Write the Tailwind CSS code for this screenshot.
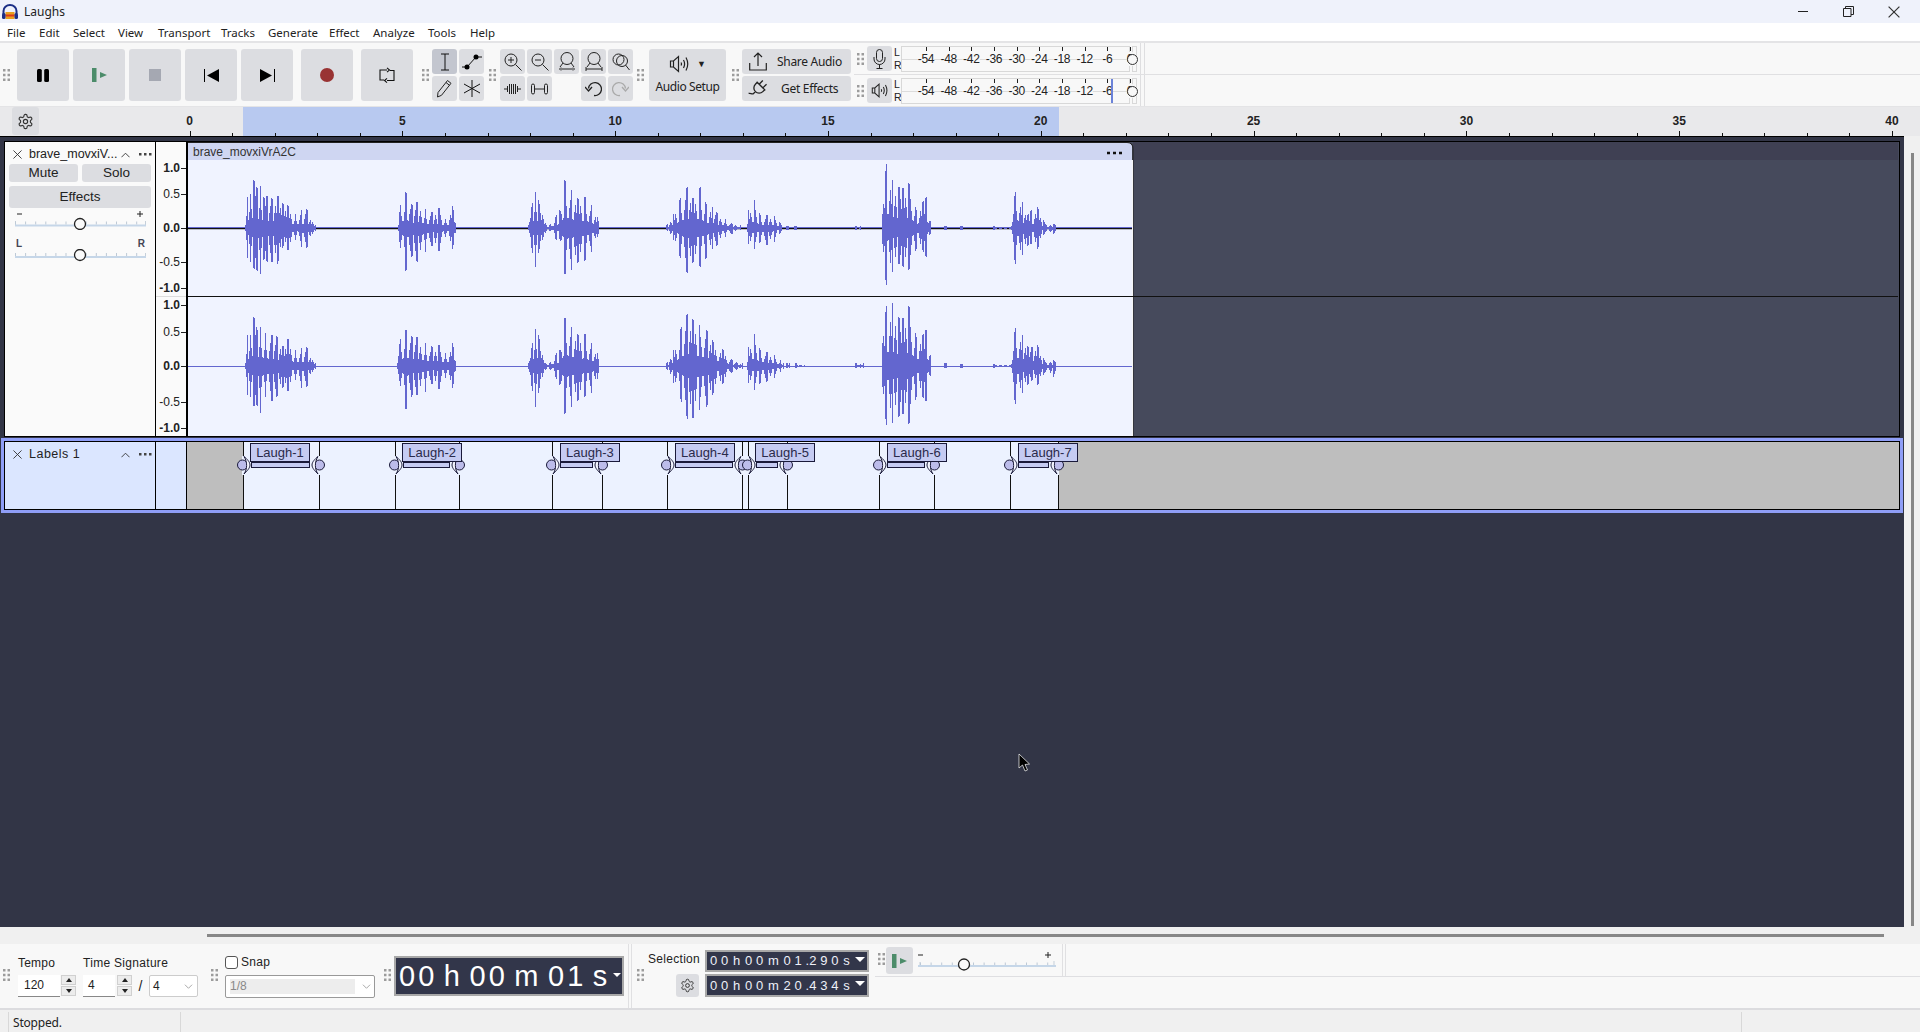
<!DOCTYPE html>
<html lang="en">
<head>
    <meta charset="UTF-8">
    <title>Laughs</title>
    <script src="https://cdn.jsdelivr.net/npm/@tailwindcss/browser@4"></script>
</head>
<body class="w-[1920px] h-[1032px] overflow-hidden flex flex-col bg-[#f0f0f0] text-[#222] font-['Liberation_Sans',sans-serif]">
    <svg class="hidden">
        <symbol id="grip" viewBox="0 0 7 12"><path fill="#9c9c9c" d="M0 0h2.5v2.5H0zM4.5 0H7v2.5H4.5zM0 4.7h2.5v2.5H0zM4.5 4.7H7v2.5H4.5zM0 9.5h2.5V12H0zM4.5 9.5H7V12H4.5z"/></symbol>
        <symbol id="gear" viewBox="0 0 24 24"><g fill="none" stroke="#333" stroke-width="1.6"><path d="M12.22 2h-.44a2 2 0 0 0-2 2v.18a2 2 0 0 1-1 1.73l-.43.25a2 2 0 0 1-2 0l-.15-.08a2 2 0 0 0-2.73.73l-.22.38a2 2 0 0 0 .73 2.73l.15.1a2 2 0 0 1 1 1.72v.51a2 2 0 0 1-1 1.74l-.15.09a2 2 0 0 0-.73 2.73l.22.38a2 2 0 0 0 2.73.73l.15-.08a2 2 0 0 1 2 0l.43.25a2 2 0 0 1 1 1.73V20a2 2 0 0 0 2 2h.44a2 2 0 0 0 2-2v-.18a2 2 0 0 1 1-1.73l.43-.25a2 2 0 0 1 2 0l.15.08a2 2 0 0 0 2.73-.73l.22-.39a2 2 0 0 0-.73-2.73l-.15-.08a2 2 0 0 1-1-1.74v-.5a2 2 0 0 1 1-1.74l.15-.09a2 2 0 0 0 .73-2.73l-.22-.38a2 2 0 0 0-2.73-.73l-.15.08a2 2 0 0 1-2 0l-.43-.25a2 2 0 0 1-1-1.73V4a2 2 0 0 0-2-2z"/><circle cx="12" cy="12" r="3"/></g></symbol>
        <symbol id="speaker" viewBox="0 0 20 20"><path fill="none" stroke="#222" stroke-width="1.2" d="M1.5 7v6h3l5 4.5v-15l-5 4.5zM4.5 7v6M12 8.5q1 1.5 0 3M14.5 6q2.200 4 0 8M17 3.500q3.500 6.500 0 13"/></symbol>
        <symbol id="playbar" viewBox="0 0 15 14"><path fill="#4c8c6a" d="M0 0h4.500v14H0zM8 4l7 3-7 3z"/></symbol>
        <symbol id="xmark" viewBox="0 0 10 10"><path stroke="#333" stroke-width="1" fill="none" d="M.5.5l9 9M9.500.5l-9 9"/></symbol>
        <symbol id="chev" viewBox="0 0 10 6"><path stroke="#333" stroke-width="1" fill="none" d="M.5 5.500L5 1l4.500 4.500"/></symbol>
        <symbol id="dots" viewBox="0 0 13 3"><path fill="#444" d="M0 0h2.500v2.500H0zM5 0h2.500v2.500H5zM10 0h2.500v2.500H10z"/></symbol>
        <symbol id="down" viewBox="0 0 12 7"><path stroke="#888" fill="none" d="M1 1l5 5 5-5"/></symbol>
    </svg>

    <!-- title bar -->
    <div class="h-[23px] shrink-0 flex items-center bg-[#eff2fb] pl-[2px]">
        <svg class="w-[16px] h-[16px]" viewBox="0 0 16 16">
            <path d="M1.500 10V7a6.500 6 0 0 1 13 0v3" fill="none" stroke="#1c2f86" stroke-width="2"/>
            <rect x="3.500" y="8" width="9" height="7" fill="#e8a020"/><rect x="3.500" y="10.500" width="9" height="2" fill="#dd3a1a"/>
            <rect x="0" y="9" width="3.500" height="6" rx="1.500" fill="#1c2f86"/><rect x="12.500" y="9" width="3.500" height="6" rx="1.500" fill="#1c2f86"/>
        </svg>
        <span class="ml-[6px] text-[12px] font-['Noto_Sans',sans-serif]">Laughs</span>
        <div class="ml-auto flex items-center pr-[20px] gap-[34px]">
            <svg class="w-[11px] h-[11px]" viewBox="0 0 11 11"><path d="M0 5.500h10" stroke="#222" stroke-width="1"/></svg>
            <svg class="w-[11px] h-[11px]" viewBox="0 0 11 11"><path d="M.5 2.500h7.500v8H.5zM2.500 2.500V.5h8v8H8" fill="none" stroke="#222" stroke-width="1"/></svg>
            <svg class="w-[12px] h-[12px]" viewBox="0 0 10 10"><use href="#xmark"/></svg>
        </div>
    </div>

    <!-- menu bar -->
    <div class="h-[18px] shrink-0 bg-white flex items-center pl-[7px] pt-[2px] text-[11.5px] font-['Noto_Sans',sans-serif]">
        <span class="w-[32px]">File</span><span class="w-[34px]">Edit</span><span class="w-[45px]">Select</span><span class="w-[40px]">View</span><span class="w-[63px]">Transport</span><span class="w-[47px]">Tracks</span><span class="w-[61px]">Generate</span><span class="w-[44px]">Effect</span><span class="w-[55px]">Analyze</span><span class="w-[42px]">Tools</span><span>Help</span>
    </div>

    <!-- top toolbars -->
    <div class="h-[66px] shrink-0 flex bg-[#f8f8f8] border-t-2 border-b border-[#e4e4e6]">
        <div class="w-[854px] shrink-0 flex items-start pt-[6px] pl-[3px]">
            <svg class="w-[7px] h-[12px] mt-[20px] mr-[7px]"><use href="#grip"/></svg>
            <div class="flex gap-[4px]">
                <div class="w-[52px] h-[52px] rounded-[3px] bg-[#dcdde1] flex items-center justify-center"><svg class="w-[12px] h-[13px]" viewBox="0 0 12 13"><rect width="4.800" height="13" rx="1.500"/><rect x="7.200" width="4.800" height="13" rx="1.500"/></svg></div>
                <div class="w-[52px] h-[52px] rounded-[3px] bg-[#dcdde1] flex items-center justify-center"><svg class="w-[15px] h-[14px]"><use href="#playbar"/></svg></div>
                <div class="w-[52px] h-[52px] rounded-[3px] bg-[#dcdde1] flex items-center justify-center"><div class="w-[12px] h-[12px] bg-[#a5a8b2]"></div></div>
                <div class="w-[52px] h-[52px] rounded-[3px] bg-[#dcdde1] flex items-center justify-center"><svg class="w-[15px] h-[13px]" viewBox="0 0 15 13"><path d="M0 0h1v13H0zM15 0v13L3 6.500z"/></svg></div>
                <div class="w-[52px] h-[52px] rounded-[3px] bg-[#dcdde1] flex items-center justify-center"><svg class="w-[15px] h-[13px]" viewBox="0 0 15 13"><path d="M14 0h1v13h-1zM0 0v13l12-6.500z"/></svg></div>
                <div class="w-[52px] h-[52px] rounded-[3px] bg-[#dcdde1] flex items-center justify-center ml-[4px]"><div class="w-[14px] h-[14px] rounded-full bg-[#993333]"></div></div>
                <div class="w-[52px] h-[52px] rounded-[3px] bg-[#dcdde1] flex items-center justify-center ml-[4px]"><svg class="w-[16px] h-[17px]" viewBox="0 0 16 17"><path d="M8 3H1v10h4M8 13.500h7V3.500h-4M8 .8L10.500 3 8 5.200M8 11.300L5.500 13.500 8 15.700" fill="none" stroke="#111" stroke-width="1.100"/></svg></div>
            </div>
            <svg class="w-[7px] h-[12px] mt-[20px] ml-[9px] mr-[3px]"><use href="#grip"/></svg>
            <div class="grid grid-cols-2 gap-[2px]">
                <div class="w-[25px] h-[25px] rounded-[3px] bg-[#c3c6cf] flex items-center justify-center"><svg class="w-[12px] h-[18px]" viewBox="0 0 12 18"><path d="M2 1h8M2 17h8M6 1v16" stroke="#111" fill="none"/></svg></div>
                <div class="w-[25px] h-[25px] rounded-[3px] bg-[#dcdde1] flex items-center justify-center"><svg class="w-[20px] h-[16px]" viewBox="0 0 20 16"><path d="M0 13h5l9-10h6" stroke="#111" fill="none"/><circle cx="5" cy="13" r="2.500"/><circle cx="14" cy="3" r="2.500"/></svg></div>
                <div class="w-[25px] h-[25px] rounded-[3px] bg-[#dcdde1] flex items-center justify-center"><svg class="w-[17px] h-[19px]" viewBox="0 0 17 19"><path d="M2 13.500L11.500 1.500l3.500 2.800-9.500 12-4 1.700zM10 3.500l3.500 2.800" fill="none" stroke="#222"/></svg></div>
                <div class="w-[25px] h-[25px] rounded-[3px] bg-[#dcdde1] flex items-center justify-center"><svg class="w-[16px] h-[17px]" viewBox="0 0 16 17"><path d="M8 0v17M0 4l16 9M16 4L0 13" stroke="#111" fill="none"/></svg></div>
            </div>
            <svg class="w-[7px] h-[12px] mt-[20px] ml-[5px] mr-[4px]"><use href="#grip"/></svg>
            <div class="grid grid-cols-5 gap-[2px]">
                <div class="w-[25px] h-[25px] rounded-[3px] bg-[#dcdde1] flex items-center justify-center"><svg class="w-[18px] h-[18px]" viewBox="0 0 18 18"><circle cx="7" cy="7" r="6" fill="none" stroke="#222"/><path d="M11.500 11.500l6 6M4 7h6M7 4v6" stroke="#222" fill="none"/></svg></div>
                <div class="w-[25px] h-[25px] rounded-[3px] bg-[#dcdde1] flex items-center justify-center"><svg class="w-[18px] h-[18px]" viewBox="0 0 18 18"><circle cx="7" cy="7" r="6" fill="none" stroke="#222"/><path d="M11.500 11.500l6 6M4 7h6" stroke="#222" fill="none"/></svg></div>
                <div class="w-[25px] h-[25px] rounded-[3px] bg-[#dcdde1] flex items-center justify-center"><svg class="w-[18px] h-[20px]" viewBox="0 0 18 20"><circle cx="9" cy="6.500" r="6" fill="none" stroke="#222"/><path d="M5 11l-3 4M13 11l3 4M3 17h12M3 15.500l-1.500 1.500 1.500 1.500M15 15.500l1.500 1.500-1.500 1.500" stroke="#222" fill="none"/></svg></div>
                <div class="w-[25px] h-[25px] rounded-[3px] bg-[#dcdde1] flex items-center justify-center"><svg class="w-[18px] h-[20px]" viewBox="0 0 18 20"><circle cx="9" cy="6.500" r="6" fill="none" stroke="#222"/><path d="M5 11l-3 4M13 11l3 4M1 17h16M1 15v4M17 15v4" stroke="#222" fill="none"/></svg></div>
                <div class="w-[25px] h-[25px] rounded-[3px] bg-[#dcdde1] flex items-center justify-center"><svg class="w-[18px] h-[18px]" viewBox="0 0 18 18"><circle cx="6.500" cy="6.500" r="5.500" fill="none" stroke="#222"/><circle cx="10" cy="8" r="5.500" fill="none" stroke="#222"/><path d="M13.500 12l4 5" stroke="#222" fill="none"/></svg></div>
                <div class="w-[25px] h-[25px] rounded-[3px] bg-[#dcdde1] flex items-center justify-center"><svg class="w-[17px] h-[12px]" viewBox="0 0 17 12"><path d="M0 6h3.500M13.500 6H17M3.500 3v6M5.500 1v10M7.500 1v10M9.500 1v10M11.500 1v10M13.500 3v6" stroke="#222" fill="none"/></svg></div>
                <div class="w-[25px] h-[25px] rounded-[3px] bg-[#dcdde1] flex items-center justify-center"><svg class="w-[17px] h-[12px]" viewBox="0 0 17 12"><path d="M3.500 6h10M.5 2.500a1.500 1.500 0 0 1 3 0v7a1.500 1.500 0 0 1-3 0zM13.500 2.500a1.500 1.500 0 0 1 3 0v7a1.500 1.500 0 0 1-3 0z" stroke="#222" fill="none"/></svg></div>
                <div class="w-[25px] h-[25px]"></div>
                <div class="w-[25px] h-[25px] rounded-[3px] bg-[#dcdde1] flex items-center justify-center"><svg class="w-[17px] h-[17px]" viewBox="0 0 17 17"><path d="M3.500 8.500A6.500 6.500 0 1 1 9 15.500" fill="none" stroke="#222" stroke-width="1.300"/><path d="M0 7l3.500 4L7 7" fill="none" stroke="#222" stroke-width="1.300"/></svg></div>
                <div class="w-[25px] h-[25px] rounded-[3px] bg-[#dcdde1] flex items-center justify-center"><svg class="w-[17px] h-[17px]" viewBox="0 0 17 17"><path d="M13.500 8.500A6.500 6.500 0 1 0 8 15.500" fill="none" stroke="#aaa" stroke-width="1.300"/><path d="M17 7l-3.500 4L10 7" fill="none" stroke="#aaa" stroke-width="1.300"/></svg></div>
            </div>
            <svg class="w-[7px] h-[12px] mt-[20px] ml-[4px] mr-[5px]"><use href="#grip"/></svg>
            <div class="w-[77px] h-[52px] rounded-[3px] bg-[#dcdde1] flex flex-col items-center pt-[5px]">
                <div class="flex items-center gap-[8px] h-[20px]"><svg class="w-[20px] h-[20px]"><use href="#speaker"/></svg><span class="text-[9px] leading-none">▼</span></div>
                <span class="text-[12px] mt-[4px] whitespace-nowrap font-['Noto_Sans',sans-serif] tracking-[-0.4px]">Audio Setup</span>
            </div>
            <svg class="w-[7px] h-[12px] mt-[20px] ml-[6px] mr-[3px]"><use href="#grip"/></svg>
            <div class="flex flex-col gap-[2px]">
                <div class="w-[109px] h-[25px] rounded-[3px] bg-[#dcdde1] flex items-center text-[12px] font-['Noto_Sans',sans-serif] tracking-[-0.3px]"><svg class="w-[18px] h-[19px] ml-[7px] mr-[10px]" viewBox="0 0 18 19"><path d="M.7 11v7h16.600v-7M9 14V1M5 5l4-4 4 4" fill="none" stroke="#222" stroke-width="1.200"/></svg>Share Audio</div>
                <div class="w-[109px] h-[25px] rounded-[3px] bg-[#dcdde1] flex items-center text-[12px] font-['Noto_Sans',sans-serif] tracking-[-0.3px]"><svg class="w-[21px] h-[21px] ml-[6px] mr-[12px]" viewBox="0 0 24 24"><g transform="rotate(45 12 12)" fill="none" stroke="#222" stroke-width="1.500"><path d="M9 2v6M15 2v6M5 8h14M6 8v3a6 6 0 1 0 12 0V8M12 17v3c0 2 -3 2 -4 4"/></g></svg>Get Effects</div>
            </div>
        </div>
        <div class="flex-1 flex flex-col">
            <div class="h-[32px] border-b border-[#e0e0e2] flex items-center meter-row" data-level="0"></div>
            <div class="h-[31px] flex items-center meter-row" data-level="1"></div>
        </div>
    </div>

    <!-- timeline ruler -->
    <div class="h-[29px] shrink-0 bg-[#e9e9eb] relative" id="ruler">
        <div class="absolute left-[243px] w-[816px] top-0 bottom-0 bg-[#b8c9f0]"></div>
        <div class="absolute left-[12px] w-[27px] top-0 bottom-[1px] rounded-[3px] bg-[#dcdde1] flex items-center justify-center"><svg class="w-[17px] h-[17px]"><use href="#gear"/></svg></div>
    </div>

    <!-- tracks -->
    <div class="h-[791px] shrink-0 flex">
        <div class="w-[1904px] bg-[#323546] border-t border-black pt-[4px] relative">
            <div class="ml-[4px] w-[1896px] h-[296px] border border-black flex">
                <div class="w-[150px] h-full bg-[#fafafa]">
                    <div class="flex items-center h-[22px] pt-[3px] pl-[8px] text-[12.5px]">
                        <svg class="w-[9px] h-[9px]"><use href="#xmark"/></svg>
                        <span class="ml-[7px] w-[90px] truncate">brave_movxiV...</span>
                        <svg class="w-[9px] h-[6px] ml-[2px]"><use href="#chev"/></svg>
                        <svg class="w-[13px] h-[3px] ml-[9px]"><use href="#dots"/></svg>
                    </div>
                    <div class="flex gap-[4px] px-[4px] text-[13.5px]">
                        <div class="w-[69px] h-[18px] pt-px rounded-[3px] bg-[#dcdde1] flex items-center justify-center">Mute</div>
                        <div class="w-[69px] h-[18px] pt-px rounded-[3px] bg-[#dcdde1] flex items-center justify-center">Solo</div>
                    </div>
                    <div class="mx-[4px] mt-[4px] h-[22px] pt-px rounded-[3px] bg-[#dcdde1] flex items-center justify-center text-[13.5px]">Effects</div>
                    <svg class="block ml-[10px]" width="131" height="22" viewBox="0 0 131 22">
                        <path d="M2 6h5M122 6h6M125 3v6" stroke="#222" stroke-width="1"/>
                        <path d="M0.500 13v4M130.500 13v4" stroke="#c5cfd9"/>
                        <path d="M0 15h131" stroke="#bdc9d6" stroke-dasharray="1 9.100" stroke-width="3"/>
                        <path d="M0 17.500h131" stroke="#c5d6e8" stroke-width="2"/>
                        <circle cx="65" cy="16" r="5.500" fill="#fafafa" stroke="#222" stroke-width="1.300"/>
                    </svg>
                    <div class="flex justify-between ml-[10px] px-[1px] w-[131px] text-[10px] font-bold leading-[10px] mt-[9px] text-[#445]"><span>L</span><span>R</span></div>
                    <svg class="block ml-[10px]" width="131" height="14" viewBox="0 0 131 14">
                        <path d="M0.500 4v4M130.500 4v4" stroke="#c5cfd9"/>
                        <path d="M0 5.500h131" stroke="#bdc9d6" stroke-dasharray="1 9.100" stroke-width="3"/>
                        <path d="M0 8h131" stroke="#c5d6e8" stroke-width="2"/>
                        <circle cx="65" cy="6" r="5.500" fill="#fafafa" stroke="#222" stroke-width="1.300"/>
                    </svg>
                </div>
                <div class="w-px bg-black"></div>
                <div class="w-[30px] h-full bg-[#fafafa] relative" id="vruler"></div>
                <div class="w-[2px] bg-black"></div>
                <div class="flex-1 relative bg-[#464a5c]">
                    <svg id="wave" class="block" width="1710" height="294" viewBox="188 142 1710 294"></svg>
                    <div class="absolute left-[5px] top-[1px] h-[18px] flex items-center text-[12px] text-[#333]">brave_movxiVrA2C</div>
                </div>
            </div>
            <div class="mt-px ml-px w-[1902px] h-[75px] border-[3px] border-[#8f9ef7]">
                <div class="h-full border border-black flex">
                    <div class="w-[150px] bg-[#dbe6ff] pl-[8px] text-[12.5px]">
                        <div class="flex items-center h-[24px] pt-px">
                            <svg class="w-[9px] h-[9px]"><use href="#xmark"/></svg>
                            <span class="ml-[7px] w-[90px] tracking-[0.5px]">Labels 1</span>
                            <svg class="w-[9px] h-[6px] ml-[2px]"><use href="#chev"/></svg>
                            <svg class="w-[13px] h-[3px] ml-[9px]"><use href="#dots"/></svg>
                        </div>
                    </div>
                    <div class="w-px bg-black"></div>
                    <div class="w-[30px] bg-[#dbe6ff]"></div>
                    <div class="w-px bg-black"></div>
                    <div class="flex-1 relative bg-[#bebebe] overflow-hidden" id="labels">
                        <div class="absolute left-[56px] w-[816px] top-0 bottom-0 bg-[#ecf2ff]"></div>
                    </div>
                </div>
            </div>
            <svg class="absolute left-[1018px] top-[616px] w-[13px] h-[19px]" viewBox="0 0 13 19"><path d="M1 1v14l3.500-3 2.500 6 2.500-1-2.500-5.500 4.500-.5z" fill="#000" stroke="#fff" stroke-width=".7"/></svg>
        </div>
        <div class="flex-1 pt-[17px] pl-[7px]"><div class="w-[3px] h-[773px] bg-[#878787]"></div></div>
    </div>

    <!-- horizontal scrollbar -->
    <div class="h-[17px] shrink-0 pt-[7px] pl-[207px]"><div class="w-[1677px] h-[3px] bg-[#878787]"></div></div>

    <!-- bottom toolbars -->
    <div class="h-[66px] shrink-0 flex bg-[#f8f8f8] border-b-2 border-[#dcdcdf]">
        <div class="w-[875px] shrink-0 flex items-start pl-[3px]">
            <svg class="w-[7px] h-[12px] mt-[25px] mr-[8px]"><use href="#grip"/></svg>
            <div class="w-[58px] mr-[7px] pt-[11px]">
                <div class="h-[16px] text-[12px] leading-[16px] tracking-[0.2px]">Tempo</div>
                <div class="flex gap-px mt-[4px]">
                    <div class="w-[42px] h-[22px] bg-white border-b border-[#888] text-[12px] leading-[21px] pl-[6px]">120</div>
                    <div class="w-[15px] h-[21px] flex flex-col gap-px">
                        <div class="h-[10px] bg-[#ececec] border border-[#d0d0d0] flex items-center justify-center"><div class="w-0 h-0 border-x-[3px] border-x-transparent border-b-[4px] border-b-[#222]"></div></div>
                        <div class="h-[10px] bg-[#ececec] border border-[#d0d0d0] flex items-center justify-center"><div class="w-0 h-0 border-x-[3px] border-x-transparent border-t-[4px] border-t-[#222]"></div></div>
                    </div>
                </div>
            </div>
            <div class="w-[115px] pt-[11px]">
                <div class="h-[16px] text-[12px] leading-[16px] whitespace-nowrap tracking-[0.3px]">Time Signature</div>
                <div class="flex mt-[4px]">
                    <div class="w-[32px] h-[22px] bg-white border-b border-[#888] text-[12px] leading-[21px] pl-[5px]">4</div>
                    <div class="w-[15px] h-[21px] ml-[2px] flex flex-col gap-px">
                        <div class="h-[10px] bg-[#ececec] border border-[#d0d0d0] flex items-center justify-center"><div class="w-0 h-0 border-x-[3px] border-x-transparent border-b-[4px] border-b-[#222]"></div></div>
                        <div class="h-[10px] bg-[#ececec] border border-[#d0d0d0] flex items-center justify-center"><div class="w-0 h-0 border-x-[3px] border-x-transparent border-t-[4px] border-t-[#222]"></div></div>
                    </div>
                    <span class="w-[17px] text-center text-[14px] leading-[22px]">/</span>
                    <div class="w-[49px] h-[22px] bg-white border border-[#ccc] rounded-[2px] text-[12px] leading-[20px] pl-[3px] flex items-center justify-between pr-[4px]">4<svg class="w-[9px] h-[5px]"><use href="#down"/></svg></div>
                </div>
            </div>
            <svg class="w-[7px] h-[12px] mt-[25px] ml-[13px] mr-[7px]"><use href="#grip"/></svg>
            <div class="w-[150px] pt-[11px]">
                <div class="h-[14px] flex items-center text-[12px] tracking-[0.3px]"><div class="w-[13px] h-[13px] border border-[#555] rounded-[3px] bg-white mr-[3px]"></div>Snap</div>
                <div class="mt-[6px] h-[23px] bg-white border border-[#999] rounded-[2px] pl-[4px] pt-[3px] flex items-start">
                    <div class="w-[125px] h-[15px] bg-[#ededed] text-[12px] leading-[15px] text-[#888]">1/8</div>
                    <svg class="w-[9px] h-[5px] ml-[7px] mt-[5px]"><use href="#down"/></svg>
                </div>
            </div>
            <svg class="w-[7px] h-[12px] mt-[25px] ml-[9px] mr-[3px]"><use href="#grip"/></svg>
            <div class="w-[230px] h-[40px] mt-[12px] border-2 border-[#a8a8a8] bg-[#32364a] text-white text-[29px] leading-[36px] pl-[3px] relative whitespace-nowrap tracking-[3px] [word-spacing:-4.5px]">00 h 00 m 01 s<div class="absolute right-px top-[15px] w-0 h-0 border-x-[4px] border-x-transparent border-t-[4px] border-t-white"></div></div>
            <div class="h-full ml-[4px] w-[4px] border-x border-[#e0e0e2]"></div>
            <svg class="w-[7px] h-[12px] mt-[25px] ml-[5px] mr-[4px]"><use href="#grip"/></svg>
            <div class="w-[51px] pt-[8px] flex flex-col items-end">
                <div class="h-[14px] text-[12px] leading-[14px] w-full whitespace-nowrap tracking-[0.3px]">Selection</div>
                <div class="w-[23px] h-[23px] rounded-[3px] bg-[#dcdde1] mt-[8px] flex items-center justify-center"><svg class="w-[15px] h-[15px]"><use href="#gear"/></svg></div>
            </div>
            <div class="flex flex-col gap-[2px] ml-[6px] pt-[6px]">
                <div class="w-[164px] h-[22px] border-2 border-[#a8a8a8] bg-[#32364a] text-[#eef0f8] text-[13px] leading-[18px] pl-[3px] tracking-[3.8px] [word-spacing:-6.5px] whitespace-nowrap relative">00 h 00 m 01<span class="tracking-[0px]">.</span>290 s<div class="absolute right-[2px] top-[5px] w-0 h-0 border-x-[5px] border-x-transparent border-t-[5px] border-t-white"></div></div>
                <div class="w-[164px] h-[23px] border-2 border-[#a8a8a8] bg-[#32364a] text-[#eef0f8] text-[13px] leading-[19px] pl-[3px] tracking-[3.8px] [word-spacing:-6.5px] whitespace-nowrap relative">00 h 00 m 20<span class="tracking-[0px]">.</span>434 s<div class="absolute right-[2px] top-[5px] w-0 h-0 border-x-[5px] border-x-transparent border-t-[5px] border-t-white"></div></div>
            </div>
        </div>
        <div class="flex-1 flex flex-col">
            <div class="h-[33px] border-b border-[#dfdfe2] flex items-start">
                <svg class="w-[7px] h-[12px] mt-[9px] ml-[3px] mr-[1px] shrink-0"><use href="#grip"/></svg>
                <div class="w-[27px] h-[27px] mt-[3px] rounded-[3px] bg-[#dcdde1] flex items-center justify-center"><svg class="w-[15px] h-[14px]"><use href="#playbar"/></svg></div>
                <svg class="block ml-[5px] mt-[3px] shrink-0" width="138" height="28" viewBox="0 0 138 28">
                    <path d="M0 8h5M127 8h6M130 5v6" stroke="#222" stroke-width="1"/>
                    <path d="M2 15v4M136 14v5" stroke="#c5cfd9"/>
                    <path d="M2 17h134" stroke="#bdc9d6" stroke-dasharray="1 9.600" stroke-width="3"/>
                    <path d="M0 19h138" stroke="#c5d6e8" stroke-width="2"/>
                    <circle cx="46" cy="17.500" r="5.500" fill="#fafafa" stroke="#222" stroke-width="1.300"/>
                </svg>
                <div class="h-full w-[4px] ml-[6px] border-x border-[#e0e0e2]"></div>
            </div>
        </div>
    </div>

    <!-- status bar -->
    <div class="flex-1 flex text-[12px] font-['Noto_Sans',sans-serif] tracking-[-0.2px]">
        <div class="w-[9px] border-r border-[#d8d8d8] my-[2px]"></div>
        <div class="w-[172px] border-r border-[#d8d8d8] my-[2px] pl-[4px] leading-[21px]">Stopped.</div>
        <div class="w-[1561px] border-r border-[#d8d8d8] my-[2px]"></div>
    </div>

    <script>
        // timeline ruler: 42.56px per second, zero at x=189.6
        const ruler = document.getElementById("ruler");
        let rulerHtml = "";
        for (let s = 0; s <= 40; s++) {
            const x = 189.6 + 42.56 * s;
            const major = s % 5 === 0;
            rulerHtml += `<div class="absolute bottom-0 w-px bg-[#111] ${major ? "h-[5px]" : "h-[3px]"}" style="left:${Math.round(x)}px"></div>`;
            if (major) rulerHtml += `<span class="absolute top-[8px] -translate-x-1/2 text-[12px] leading-[13px] font-bold text-[#222]" style="left:${x}px">${s}</span>`;
        }
        ruler.insertAdjacentHTML("beforeend", rulerHtml);

        // level meters
        const meterLabels = ["-54", "-48", "-42", "-36", "-30", "-24", "-18", "-12", "-6", "0"];
        document.querySelectorAll(".meter-row").forEach(row => {
            const play = row.dataset.level === "1";
            let marks = "";
            meterLabels.forEach((label, i) => {
                const x = 24 + i * 22.67;
                marks += `<div class="absolute top-0 w-px h-[4px] bg-[#222]" style="left:${Math.round(x)}px"></div>`;
                marks += `<span class="absolute top-[5px] -translate-x-1/2 text-[12px] leading-[14px] bg-[#f8f8f8] tracking-[-0.3px]" style="left:${x}px">${label}</span>`;
            });
            row.innerHTML = `
                <svg class="w-[7px] h-[12px] ml-[3px] shrink-0"><use href="#grip"/></svg>
                <div class="w-[25px] h-[25px] ml-[3px] rounded-[3px] bg-[#dcdde1] flex items-center justify-center">
                    ${play
                        ? '<svg class="w-[17px] h-[17px]"><use href="#speaker"/></svg>'
                        : '<svg class="w-[13px] h-[20px]" viewBox="0 0 13 20"><rect x="3.500" y=".5" width="6" height="12" rx="3" fill="none" stroke="#222"/><path d="M1 8v2a5.500 5.500 0 0 0 11 0V8M6.500 15.500V19M3.500 19.500h6" fill="none" stroke="#222"/></svg>'}
                </div>
                <div class="w-[9px] ml-[2px] text-[10.500px] leading-[13px] text-[#222]">L<br>R</div>
                <div class="w-[229px] h-[26px] border border-[#d8d8d8] relative ml-[-2px]">
                    <div class="absolute left-0 right-0 top-[12px] h-px bg-[#dcdcdc]"></div>
                    ${marks}
                    ${play ? '<div class="absolute left-[209px] top-0 bottom-0 w-[2px] bg-[#6b82d8]"></div>' : ""}
                    <div class="absolute left-[225px] top-[7px] w-[11px] h-[11px] rounded-full border border-[#333] bg-[#f8f8f8]"></div>
                </div>
                <div class="w-[5px] h-[26px] ml-[2px] border border-[#d8d8d8]"></div>
                <div class="w-[5px] self-stretch ml-[3px] border-x border-[#dedee0]"></div>`;
        });

        // vertical dB scale
        const scale = [
            ["1.0", 168, 1], ["0.5", 194, 0], ["0.0", 228, 1], ["-0.5", 262, 0], ["-1.0", 288, 1],
            ["1.0", 305, 1], ["0.5", 332, 0], ["0.0", 366, 1], ["-0.5", 402, 0], ["-1.0", 428, 1]
        ];
        document.getElementById("vruler").innerHTML = scale.map(([t, y, b]) =>
            `<span class="absolute right-[6px] -translate-y-1/2 text-[12px] leading-[13px] text-[#222] ${b ? "font-bold" : ""}" style="top:${y - 142}px">${t}</span>
             <div class="absolute right-0 w-[5px] h-px bg-[#222]" style="top:${y - 142}px"></div>`
        ).join("") + '<div class="absolute left-0 right-0 top-[154px] h-px bg-[#dcdcdc]"></div>';

        // waveform peaks, read off the two crops: [x, top, bottom]
        const crop4 = x => x / 3, crop5 = x => x / 2.306 + 480;
        const ch1 = [
            [crop4, [[737,285,302],[740,200,380],[750,190,395],[760,145,415],[770,175,420],[780,168,430],[790,205,385],[800,195,395],[815,205,395],[832,195,400],[848,220,345],[862,225,360],[885,250,330],[903,238,350],[920,235,352],[938,280,305],[945,285,302]]],
            [crop4, [[1194,285,302],[1198,230,345],[1216,183,425],[1235,225,375],[1250,215,395],[1275,235,365],[1295,245,345],[1316,232,365],[1335,265,320],[1357,225,358],[1366,285,300]]],
            [crop5, [[112,285,300],[118,225,355],[127,185,412],[135,215,360],[145,265,320],[160,285,300],[175,255,330],[182,240,325],[194,148,433],[210,180,420],[225,205,395],[241,198,390],[256,225,365],[270,260,320],[274,285,300]]],
            [crop5, [[430,285,300],[445,250,330],[460,205,380],[477,168,430],[490,205,395],[507,170,410],[520,220,385],[535,230,355],[545,245,345],[565,265,320],[580,280,310],[600,285,300]]],
            [crop5, [[618,240,340],[632,208,355],[645,255,335],[660,255,345],[678,258,335],[690,275,310],[696,286,300]]],
            [crop5, [[706,288,298],[712,288,298]]], [crop5, [[726,286,298],[730,286,298]]], [crop5, [[866,288,298],[878,288,298]]],
            [crop5, [[928,250,340],[935,98,467],[950,150,425],[965,170,400],[975,175,410],[988,155,420],[1005,240,355],[1020,215,360],[1028,198,382],[1040,280,305]]],
            [crop5, [[1072,288,298],[1076,288,298]]], [crop5, [[1108,288,298],[1113,288,298]]], [crop5, [[1185,288,298],[1225,288,298]]],
            [crop5, [[1228,275,310],[1232,183,403],[1250,215,375],[1262,255,345],[1270,240,340],[1285,230,355],[1300,275,310],[1322,280,312],[1328,288,298]]]
        ];
        const ch2 = [
            [crop4, [[737,700,716],[740,615,795],[750,615,800],[760,555,830],[770,600,825],[780,590,848],[795,610,800],[815,615,815],[830,620,800],[848,650,770],[862,625,785],[885,660,750],[903,655,775],[920,650,770],[938,695,720],[945,700,716]]],
            [crop4, [[1192,700,716],[1198,630,760],[1216,597,842],[1235,620,795],[1250,620,795],[1275,640,785],[1295,650,760],[1316,645,780],[1335,670,745],[1357,638,775],[1366,700,716]]],
            [crop5, [[112,700,716],[118,650,770],[127,595,833],[135,620,780],[145,690,730],[160,700,716],[175,670,745],[182,660,765],[194,560,853],[210,590,830],[225,615,810],[241,610,800],[256,640,790],[270,670,745],[274,700,716]]],
            [crop5, [[430,700,716],[445,660,760],[462,595,810],[477,550,866],[490,570,865],[505,585,840],[522,600,830],[537,635,790],[560,660,760],[580,690,726],[592,698,718],[605,700,716]]],
            [crop5, [[618,650,760],[632,610,780],[645,660,760],[660,665,755],[678,675,745],[692,690,725],[700,700,715]]],
            [crop5, [[706,700,715],[714,700,715]]], [crop5, [[728,700,715],[748,704,712]]], [crop5, [[866,700,715],[884,700,715]]],
            [crop5, [[928,640,770],[935,530,885],[950,520,880],[965,565,860],[975,565,850],[988,525,885],[1005,620,800],[1020,615,800],[1028,595,815],[1040,680,735]]],
            [crop5, [[1072,700,715],[1076,700,715]]], [crop5, [[1108,702,714],[1113,702,714]]], [crop5, [[1185,702,714],[1225,703,713]]],
            [crop5, [[1228,690,730],[1232,590,825],[1250,615,790],[1262,650,765],[1272,650,750],[1285,645,765],[1300,690,730],[1322,690,740],[1328,700,715]]]
        ];

        function wavePath(bursts, centerCrop, centerY) {
            let d = "";
            bursts.forEach(([toX, peaks]) => {
                const pts = peaks.map(([x, t, b]) => [toX(x), (centerCrop - t) / 3, (b - centerCrop) / 3]);
                for (let x = Math.floor(pts[0][0]); x <= pts[pts.length - 1][0]; x++) {
                    let i = 0;
                    while (i < pts.length - 2 && pts[i + 1][0] < x) i++;
                    const a = pts[i], b = pts[i + 1] || a;
                    const k = b[0] === a[0] ? 0 : Math.min(1, Math.max(0, (x - a[0]) / (b[0] - a[0])));
                    const onPeak = pts.some(p => Math.abs(p[0] - x) < 0.9);
                    // comb of spikes about every 5px, as in the laugh bursts
                    const comb = Math.pow(Math.abs(Math.cos(x * Math.PI / 5)), 3);
                    const f = onPeak ? 1 : 0.22 + 0.5 * comb;
                    const up = (a[1] + (b[1] - a[1]) * k) * f;
                    const down = (a[2] + (b[2] - a[2]) * k) * f;
                    d += `M${x + 0.5} ${(centerY - up).toFixed(1)}V${(centerY + down).toFixed(1)}`;
                }
            });
            return d;
        }

        document.getElementById("wave").innerHTML = `
            <rect x="1133" y="142" width="766" height="18" fill="#3f4053"/>
            <path d="M188 436V143H1127q5 0 5 5V436z" fill="#f0f3ff"/>
            <path d="M188 143H1127q5 0 5 5V160H188z" fill="#cfd6f2"/>
            <path d="M188 142.500H1127q6 0 6 6V436" fill="none" stroke="#222" stroke-width="1"/>
            <path d="M1132.500 160V436" stroke="#f5f5f5" stroke-width="1"/>
            <path d="M188 228.500H1132" stroke="#111" stroke-width="1.400"/>
            <path d="M188 227.500H1132" stroke="#6366cf" stroke-width="1"/>
            <path d="M188 366.500H1132" stroke="#6366cf" stroke-width="1"/>
            <path d="M188 296.500H1898" stroke="#111" stroke-width="1"/>
            <path d="${wavePath(ch1, 293, 228)}" stroke="#6366cf" stroke-width="1" shape-rendering="crispEdges"/>
            <path d="${wavePath(ch2, 708, 366)}" stroke="#6366cf" stroke-width="1" shape-rendering="crispEdges"/>
            <path d="M1107 153h3M1113 153h3M1119 153h3" stroke="#111" stroke-width="2.500"/>`;

        // label track, x in page pixels
        const labelData = [
            ["Laugh-1", 242.5, 318.5], ["Laugh-2", 394.7, 459.3], ["Laugh-3", 552.4, 602.3], ["Laugh-4", 667.3, 742],
            ["Laugh-5", 747.6, 786.6], ["Laugh-6", 879.4, 933.6], ["Laugh-7", 1010.3, 1058]
        ];
        const originX = 187;
        const lineAt = x => `<div class="absolute top-0 bottom-0 w-px bg-[#111]" style="left:${Math.round(x - originX)}px"></div>`;
        const handle = (x, flip) => `
            <svg class="absolute top-[13px] overflow-visible" width="16" height="20" viewBox="-8 -10 16 20" style="left:${x - originX - 8}px">
                <rect x="-1" y="-9" width="2" height="19" fill="#ecf2ff"/>
                <g transform="scale(${flip ? -1 : 1} 1)">
                    <circle cx="-0.500" cy="0" r="5" fill="#bcbcea" stroke="#1a1a3a" stroke-width="1"/>
                    <path d="M1 -8.500C4 -6 7 -3 7 0C7 3 4 6 1 9C4.500 4 4.500 -3 1 -8.500z" fill="#f4f6ff" stroke="#1a1a3a" stroke-width="1"/>
                </g>
            </svg>`;
        document.getElementById("labels").insertAdjacentHTML("beforeend", labelData.map(([text, l, r]) => `
            ${lineAt(l)}${lineAt(r)}
            ${handle(l, false)}${handle(r, true)}
            <div class="absolute top-[20px] h-[6px] bg-[#c5cbf2] border border-[#1a1a3a]" style="left:${l - originX + 8}px;width:${r - l - 17}px"></div>
            <div class="absolute top-px w-[60px] h-[19px] bg-[#c5cbf2] border border-[#1a1a3a] text-[13px] leading-[17px] text-center text-[#2a2a4a] whitespace-nowrap" style="left:${l - originX + 7.500}px">${text}</div>`
        ).join(""));
    </script>
</body>
</html>
